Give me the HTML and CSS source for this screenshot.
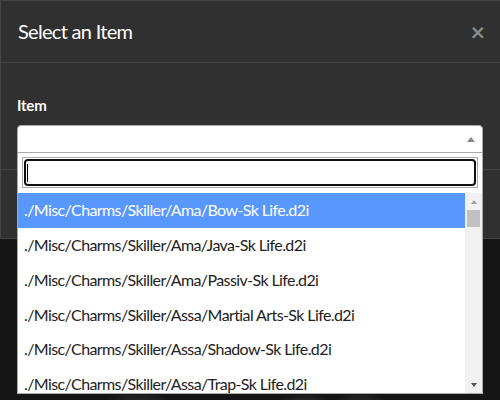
FILE: index.html
```html
<!DOCTYPE html>
<html>
<head>
<meta charset="utf-8">
<link rel="stylesheet" href="styles.css">
</head>
<body>
<div class="modal">
  <div class="modal-header">
    <h4 class="modal-title">Select an Item</h4>
    <span class="close">×</span>
  </div>
  <div class="modal-body">
    <label class="field-label">Item</label>
    <div class="select-wrap">
      <div class="select-box"><span class="select-arrow"></span></div>
      <div class="dropdown">
        <div class="search">
          <div class="search-field"><div class="search-ring"><span class="caret"></span></div></div>
        </div>
        <div class="results">
          <ul class="options">
            <li class="option highlighted">./Misc/Charms/Skiller/Ama/Bow-Sk Life.d2i</li>
            <li class="option">./Misc/Charms/Skiller/Ama/Java-Sk Life.d2i</li>
            <li class="option">./Misc/Charms/Skiller/Ama/Passiv-Sk Life.d2i</li>
            <li class="option">./Misc/Charms/Skiller/Assa/Martial Arts-Sk Life.d2i</li>
            <li class="option">./Misc/Charms/Skiller/Assa/Shadow-Sk Life.d2i</li>
            <li class="option">./Misc/Charms/Skiller/Assa/Trap-Sk Life.d2i</li>
          </ul>
          <div class="scrollbar">
            <div class="sb-btn"><span class="tri-up"></span></div>
            <div class="sb-thumb"></div>
            <div class="sb-track"></div>
            <div class="sb-btn"><span class="tri-down"></span></div>
          </div>
        </div>
      </div>
    </div>
  </div>
  <div class="modal-footer"></div>
</div>
<div class="scene"></div>
</body>
</html>
```

FILE: styles.css
```css
html, body {
  margin: 0;
  padding: 0;
  height: 100%;
  overflow: hidden;
}
body {
  background: #151515;
  font-family: Lato, "Noto Sans", sans-serif;
  color: #fff;
}
.modal {
  width: 502px;
  box-sizing: border-box;
  background: #303030;
  border: 1px solid #454545;
  border-right: none;
}
.modal-header {
  display: flex;
  align-items: center;
  justify-content: space-between;
  padding: 19px 17px 20px 17px;
  border-bottom: 1px solid #464646;
}
.modal-title {
  margin: 0;
  font-size: 20px;
  line-height: 22px;
  font-weight: 400;
  letter-spacing: -0.7px;
  color: #fff;
}
.close {
  font-size: 25px;
  line-height: 22px;
  font-weight: 700;
  color: #8b8b8b;
  margin-right: 0;
}
.modal-body {
  padding: 32px 17px 16px 16px;
}
.field-label {
  display: block;
  font-size: 15px;
  line-height: 21px;
  font-weight: 700;
  letter-spacing: -0.2px;
  margin-bottom: 9px;
}
.select-wrap {
  position: relative;
  width: 466px;
}
.select-box {
  height: 28px;
  box-sizing: border-box;
  background: #fff;
  border: 1px solid #aaa;
  border-radius: 4px 4px 0 0;
  display: flex;
  align-items: center;
  justify-content: flex-end;
  padding-right: 7px;
}
.select-arrow {
  width: 0;
  height: 0;
  border-style: solid;
  border-width: 0 4px 5px 4px;
  border-color: transparent transparent #888 transparent;
}
.dropdown {
  position: absolute;
  top: 100%;
  left: 0;
  right: 0;
  background: #fff;
  border: 1px solid #aaa;
  border-top: none;
  z-index: 10;
}
.search {
  padding: 4px 4px 5px 4px;
}
.search-field {
  height: 31px;
  box-sizing: border-box;
  border: 1px solid #aaa;
  padding: 1px;
}
.search-ring {
  height: 100%;
  box-sizing: border-box;
  border: 2px solid #101010;
  border-radius: 4px;
  display: flex;
  align-items: center;
}
.caret {
  display: block;
  width: 1px;
  height: 18px;
  background: #000;
  margin-left: 1px;
}
.results {
  display: flex;
  height: 200px;
}
.options {
  flex: 1;
  margin: 0;
  padding: 0;
  list-style: none;
  overflow: hidden;
}
.option {
  padding: 6px;
  font-size: 16px;
  line-height: 1.42857;
  letter-spacing: -0.6px;
  color: #222;
  white-space: nowrap;
}
.option.highlighted {
  background: #5897fb;
  color: #fff;
}
.scrollbar {
  width: 17px;
  background: #f1f1f1;
  display: flex;
  flex-direction: column;
}
.sb-btn {
  height: 17px;
  display: flex;
  align-items: center;
  justify-content: center;
}
.tri-up {
  width: 0;
  height: 0;
  border-style: solid;
  border-width: 0 3.5px 4px 3.5px;
  border-color: transparent transparent #a3a3a3 transparent;
}
.tri-down {
  width: 0;
  height: 0;
  border-style: solid;
  border-width: 4px 3.5px 0 3.5px;
  border-color: #505050 transparent transparent transparent;
}
.sb-thumb {
  height: 17px;
  margin: 0 2px;
  background: #c1c1c1;
}
.sb-track {
  flex: 1;
}
.modal-footer {
  height: 68px;
  border-top: 1px solid #464646;
}
.scene {
  height: 170px;
  background:
    radial-gradient(ellipse 35px 14px at 138px 165px, #2c2c2c, transparent),
    radial-gradient(ellipse 28px 12px at 305px 166px, #333, transparent),
    radial-gradient(ellipse 30px 14px at 360px 166px, #2e2e2e, transparent);
}
```
